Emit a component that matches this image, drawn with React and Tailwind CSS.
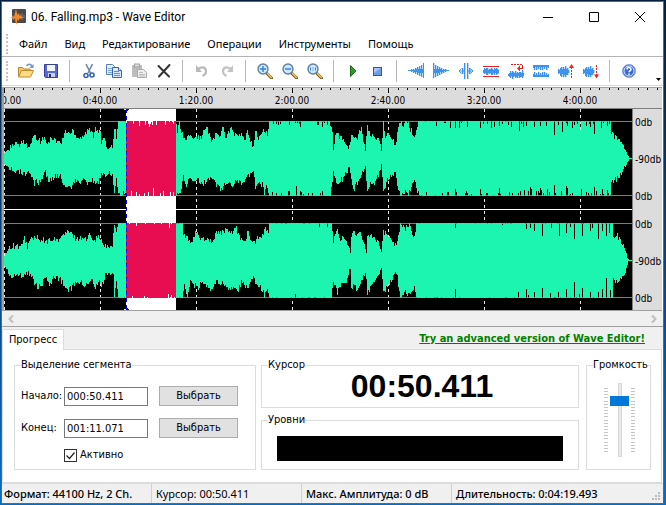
import { useState } from 'react';

const MENU = ['Файл', 'Вид', 'Редактирование', 'Операции', 'Инструменты', 'Помощь'];
const TIME_MARKS = ['0:00.00', '0:40.00', '1:20.00', '2:00.00', '2:40.00', '3:20.00', '4:00.00'];
const DB_MARKS = ['0db', '-90db', '0db', '0db', '-90db', '0db'];

const WAVE_WIDTH = 628;
const SELECTION = { start: 122, end: 172 };

// Envelopes are flat lists of [x, amplitude] pairs, full scale is 37
const CHANNELS = [
    {
        center: 49,
        roughness: 25,
        top: [0, 5, 4, 9, 8, 12, 12, 14, 16, 12, 19, 18, 25, 9, 29, 22, 32, 19, 36, 17, 40, 20, 44, 14, 46, 22, 52, 17, 57, 15, 61, 27, 66, 24, 68, 28, 74, 20, 80, 23, 84, 29, 89, 23, 91, 31, 96, 25, 97, 15, 99, 20, 102, 11, 108, 12, 110, 31, 112, 22, 114, 36, 116, 37, 120, 36, 121, 37, 172, 37, 173, 28, 175, 37, 177, 26, 182, 17, 184, 24, 187, 20, 191, 24, 195, 19, 199, 25, 202, 32, 204, 25, 207, 17, 212, 25, 215, 20, 218, 33, 221, 22, 227, 29, 233, 21, 237, 24, 240, 17, 243, 25, 249, 12, 251, 27, 254, 20, 260, 28, 263, 23, 265, 37, 325, 37, 328, 28, 329, 8, 331, 22, 333, 23, 338, 20, 345, 10, 347, 24, 352, 18, 357, 30, 361, 7, 363, 32, 366, 23, 375, 17, 377, 7, 378, 20, 379, 35, 381, 23, 388, 20, 391, 12, 394, 31, 396, 37, 399, 33, 403, 37, 406, 28, 411, 22, 414, 37, 606, 37, 607, 25, 612, 20, 616, 17, 619, 13, 621, 8, 623, 3, 625, 0],
        bottom: [0, 5, 4, 8, 8, 12, 12, 13, 16, 12, 22, 16, 25, 13, 28, 20, 30, 26, 32, 20, 34, 25, 38, 18, 41, 14, 45, 24, 48, 18, 53, 18, 56, 14, 58, 22, 62, 27, 67, 30, 71, 20, 75, 23, 80, 21, 84, 25, 88, 20, 91, 25, 94, 23, 98, 14, 101, 18, 104, 12, 108, 15, 110, 34, 112, 22, 114, 35, 116, 37, 172, 37, 176, 32, 179, 18, 182, 25, 186, 20, 189, 25, 193, 18, 196, 27, 202, 22, 208, 18, 212, 26, 217, 30, 222, 23, 228, 28, 231, 21, 238, 26, 241, 18, 249, 12, 251, 29, 254, 22, 256, 28, 258, 24, 260, 37, 262, 26, 265, 37, 326, 37, 329, 13, 333, 25, 338, 20, 345, 8, 347, 22, 349, 31, 353, 23, 361, 7, 363, 32, 366, 22, 371, 23, 375, 13, 377, 5, 379, 31, 383, 22, 391, 12, 394, 32, 396, 37, 401, 31, 404, 37, 407, 25, 411, 22, 414, 35, 418, 37, 606, 37, 607, 23, 612, 20, 616, 17, 621, 8, 623, 3, 625, 0],
        topDips: { 129: 3, 145: 6, 148: 4, 161: 4, 169: 3, 272: 3, 296: 6, 318: 6, 432: 5, 446: 7, 451: 7, 455: 7, 463: 6, 476: 7, 479: 3, 487: 7, 490: 6, 495: 5, 507: 6, 515: 10, 519: 6, 522: 5, 530: 6, 536: 5, 542: 5, 550: 14, 558: 11, 563: 5, 568: 7, 570: 4, 576: 9, 582: 5, 586: 6, 590: 13, 597: 7, 603: 5 },
        bottomDips: { 140: 3, 149: 8, 144: 4, 169: 4, 292: 10, 304: 3, 443: 4, 451: 7, 461: 3, 476: 7, 482: 3, 495: 8, 508: 3, 516: 5, 520: 6, 526: 9, 527: 7, 536: 8, 537: 6, 543: 7, 545: 4, 550: 11, 557: 5, 562: 10, 563: 8, 568: 3, 577: 7, 582: 4, 584: 3, 590: 9, 592: 5, 598: 7, 603: 6 },
    },
    {
        center: 151,
        roughness: 5,
        top: [0, 4, 2, 9, 5, 13, 9, 14, 18, 14, 20, 22, 23, 14, 26, 20, 30, 23, 33, 22, 36, 18, 39, 20, 42, 17, 47, 22, 51, 19, 56, 22, 61, 27, 64, 28, 68, 25, 72, 21, 78, 23, 82, 20, 86, 26, 90, 20, 95, 24, 97, 18, 100, 14, 104, 12, 108, 16, 110, 35, 112, 27, 114, 37, 178, 37, 179, 28, 184, 20, 188, 17, 191, 27, 194, 24, 199, 22, 204, 20, 209, 19, 213, 29, 216, 27, 220, 29, 224, 30, 228, 27, 232, 31, 236, 22, 241, 20, 244, 30, 246, 20, 250, 17, 254, 22, 259, 25, 261, 32, 264, 28, 265, 37, 327, 37, 329, 19, 333, 31, 336, 22, 342, 20, 346, 7, 347, 25, 350, 31, 352, 24, 356, 26, 362, 9, 363, 24, 367, 26, 374, 19, 377, 8, 379, 28, 384, 24, 392, 15, 396, 36, 401, 31, 405, 37, 410, 22, 412, 37, 608, 37, 609, 22, 612, 26, 616, 19, 621, 11, 623, 2, 625, 0],
        bottom: [0, 5, 4, 10, 8, 17, 14, 14, 18, 14, 22, 13, 25, 12, 29, 20, 34, 27, 38, 22, 42, 17, 45, 25, 50, 16, 56, 18, 62, 29, 67, 28, 73, 20, 78, 22, 83, 25, 88, 20, 91, 27, 95, 22, 98, 24, 101, 14, 105, 12, 109, 14, 110, 34, 112, 22, 114, 37, 178, 37, 180, 25, 183, 33, 186, 21, 190, 24, 194, 26, 197, 20, 202, 24, 207, 28, 212, 20, 218, 22, 225, 28, 230, 25, 234, 30, 237, 20, 244, 28, 248, 15, 252, 22, 256, 25, 260, 34, 263, 25, 265, 37, 327, 37, 329, 19, 333, 32, 336, 24, 341, 22, 346, 8, 347, 29, 350, 21, 353, 32, 357, 22, 361, 9, 363, 32, 369, 22, 377, 7, 379, 30, 384, 25, 392, 10, 396, 37, 401, 31, 405, 34, 410, 26, 412, 37, 608, 37, 609, 19, 612, 21, 616, 19, 621, 11, 624, 0],
        topDips: { 132: 3, 165: 5, 315: 4, 323: 4, 451: 5, 498: 2, 522: 6, 526: 5, 530: 8, 538: 13, 547: 5, 555: 13, 562: 10, 566: 4, 570: 16, 578: 13, 586: 8, 588: 5, 594: 16, 598: 8, 602: 13, 605: 10 },
        bottomDips: { 128: 2, 140: 2, 164: 4, 167: 3, 291: 4, 451: 9, 514: 6, 522: 9, 524: 3, 530: 6, 538: 10, 546: 5, 554: 6, 562: 9, 570: 16, 575: 4, 578: 10, 586: 6, 594: 6, 598: 9, 602: 20, 606: 8 },
    },
];

// Repeatable noise, so the wave does not change between renders
function noise(n) {
    const v = Math.sin(n * 127.1) * 43758.5453;
    return v - Math.floor(v);
}

function amplitudeAt(envelope, x) {
    for (let i = 0; i < envelope.length - 2; i += 2) {
        if (x >= envelope[i] && x < envelope[i + 2]) {
            const t = (x - envelope[i]) / (envelope[i + 2] - envelope[i]);
            return envelope[i + 1] + (envelope[i + 3] - envelope[i + 1]) * t;
        }
    }
    return 0;
}

function halfWave(envelope, dips, seed, roughness) {
    const result = [];
    for (let x = 0; x < WAVE_WIDTH; x++) {
        const n = noise(x + seed);
        let a = amplitudeAt(envelope, x);
        if (a > 36.5) {
            a = 37 - Math.max(0, n - 0.8) * roughness;
        } else if (a > 8) {
            a += (n - 0.5) * 6;
        }
        if (dips[x]) {
            a = 37 - dips[x];
        }
        result.push(Math.round(Math.min(a, 37)));
    }
    return result;
}

function channelPath({ center, roughness, top, bottom, topDips, bottomDips }) {
    const up = halfWave(top, topDips, center, roughness);
    const down = halfWave(bottom, bottomDips, center + 700, roughness);
    return up.map((u, x) => `M${x} ${center - u}h1v${u + down[x] + 1}h-1z`).join('');
}

const WAVE_PATH = CHANNELS.map(channelPath).join('');

function Waveform() {
    const { start, end } = SELECTION;
    return (
        <svg
            viewBox="0 0 628 201"
            preserveAspectRatio="none"
            shapeRendering="crispEdges"
            className="block h-[201px] min-w-0 flex-1 bg-black"
        >
            <defs>
                <clipPath id="selection">
                    <rect x={start} y="0" width={end - start} height="201" />
                </clipPath>
            </defs>
            {TIME_MARKS.map((mark, i) => (
                <path key={mark} d={`M${i * 96 + 0.5} 0V201`} stroke="#e8e8e8" strokeDasharray="3 3" />
            ))}
            {[12, 86, 114, 188].map((y) => (
                <rect key={y} x="0" y={y} width="628" height="1" fill="#708090" />
            ))}
            <rect x="0" y="100" width="628" height="1" fill="#fff" />
            <path d={WAVE_PATH} fill="#1bf5b0" />
            <g clipPath="url(#selection)">
                <rect x={start} y="0" width={end - start} height="201" fill="#fff" />
                <path d={WAVE_PATH} fill="#e80c50" />
            </g>
            {/* Cursor */}
            <path d={`M${start + 0.5} 0V201`} stroke="#0000ff" strokeDasharray="4 3" />
            <path d={`M${start} 0h3v1h-1v1h-2zM${start} 201h3v-1h-1v-1h-2z`} fill="#0000ff" />
            <path d={`M${start} 0h-2v1h2zM${start} 201h-2v-1h2z`} fill="#ffff00" />
        </svg>
    );
}

function Ruler() {
    return (
        <div className="overflow-hidden border-b border-[#808080] bg-[#dcdcdc]">
            <div className="mr-[30px] h-5">
                <svg
                    viewBox="0 0 628 5"
                    preserveAspectRatio="none"
                    shapeRendering="crispEdges"
                    className="block h-[5px] w-full overflow-visible"
                >
                    {Array.from({ length: 69 }, (_, i) => (
                        <rect key={i} x={Math.round(i * 9.6)} y="0" width="1" height={i % 10 ? 2 : 5} fill="#000" />
                    ))}
                </svg>
                {/* Each label is centred on its own tick, so the row starts half a cell early */}
                <div className="-ml-[7.64%] flex w-full">
                    {TIME_MARKS.map((mark) => (
                        <span key={mark} className="w-[15.287%] shrink-0 text-center text-[10px] leading-4">
                            {mark}
                        </span>
                    ))}
                </div>
            </div>
        </div>
    );
}

// Columns of a small blue wave: [x, y, height], with a pale shadow to the right
function Bars({ data }) {
    return (
        <>
            {data.map(([x, y, h]) => <rect key={`s${x}-${y}`} x={x + 1} y={y} width="1" height={h} fill="#b5d8fa" />)}
            {data.map(([x, y, h]) => <rect key={`${x}-${y}`} x={x} y={y} width="1" height={h} fill="#3b93ee" />)}
        </>
    );
}

function Lens({ children }) {
    return (
        <>
            <path d="M10 10.500L14.500 15" stroke="#7a5a1c" strokeWidth="3" strokeLinecap="round" />
            <path d="M10.500 10.500L14.300 14.500" stroke="#f0c860" strokeWidth="1.500" strokeLinecap="round" />
            <circle cx="6" cy="6" r="5" fill="#cfe6fb" stroke="#5f7f9f" strokeWidth="1.400" />
            {children}
        </>
    );
}

const FADE = [[0, 7, 1], [1, 7, 1], [2, 7, 1], [3, 6, 3], [4, 7, 1], [5, 6, 4], [6, 7, 2], [7, 5, 6], [8, 6, 3], [9, 4, 8], [10, 6, 4], [11, 3, 10], [12, 6, 4], [13, 2, 12], [14, 6, 4], [15, 0, 15]];
const SMALL_WAVE = [[0, 6, 5], [1, 7, 3], [2, 5, 8], [3, 4, 10], [4, 6, 5], [5, 4, 10], [6, 6, 6], [7, 3, 11], [8, 6, 6], [9, 5, 7], [10, 7, 3]];

const ICONS = {
    open: (
        <>
            <path d="M.5 13.500V4.500h4l1.500 1.500h6v2" fill="#f3c65a" stroke="#b8862b" />
            <path d="M.5 14l3-6.500h12l-3 6.500z" fill="#fbdc85" stroke="#c08d2e" />
            <path d="M8.500 3c2-2.500 4-2 5.500 0" fill="none" stroke="#6b93bd" strokeWidth="1.400" />
            <path d="M15.500 1v4h-4z" fill="#6b93bd" />
        </>
    ),
    save: (
        <>
            <path d="M1.500 1.500h13v13h-12l-1-1z" fill="#5a68cf" stroke="#343f9f" />
            <rect x="4" y="2" width="8" height="6" fill="#f4f6ff" />
            <rect x="5" y="10" width="7" height="4" fill="#c9cff0" />
            <rect x="6" y="11" width="2" height="3" fill="#29307c" />
        </>
    ),
    cut: (
        <>
            <path d="M5 1l4.500 9M11.500 1L7 10" stroke="#6c86a8" strokeWidth="1.600" />
            <circle cx="5" cy="12.500" r="2" fill="none" stroke="#2f62b8" strokeWidth="1.600" />
            <circle cx="11" cy="12" r="2" fill="none" stroke="#2f62b8" strokeWidth="1.600" />
        </>
    ),
    copy: (
        <>
            <path d="M.5 1.500h6l2 2v8h-8z" fill="#e6f0fd" stroke="#4f7fc4" />
            <path d="M2 5.500h4M2 7.500h4M2 9.500h4" stroke="#7fa6dc" />
            <path d="M6.500 4.500h6l3 3v7h-9z" fill="#dbe9fc" stroke="#3567b0" />
            <path d="M8 8.500h5M8 10.500h6M8 12.500h6" stroke="#5f8fd2" />
            <path d="M12.500 4.500v3h3" fill="#fff" stroke="#3567b0" />
        </>
    ),
    paste: (
        <>
            <rect x="1" y="2" width="10" height="12" rx="1" fill="#bdbdbd" />
            <rect x="3.500" y="1" width="5" height="3" fill="#dedede" stroke="#a0a0a0" />
            <path d="M6.500 6.500h6l3 3v5h-9z" fill="#efefef" stroke="#a8a8a8" />
            <path d="M8 9.500h4M8 11.500h6M8 13h6" stroke="#bcbcbc" />
        </>
    ),
    remove: <path d="M2.500 3L13 13.500M13.500 2L3 13.500" stroke="#333" strokeWidth="2" strokeLinecap="round" />,
    undo: (
        <>
            <path d="M4 6c5-3.500 8-1 8 2.500 0 2-1.500 3.500-3.500 4.500" fill="none" stroke="#b9b9b9" strokeWidth="2.200" />
            <path d="M2 2v7h6z" fill="#b9b9b9" />
        </>
    ),
    redo: (
        <>
            <path d="M12 6c-5-3.500-8-1-8 2.500 0 2 1.500 3.500 3.500 4.500" fill="none" stroke="#c3c3c3" strokeWidth="2.200" />
            <path d="M14 2v7H8z" fill="#c3c3c3" />
        </>
    ),
    zoomIn: <Lens><path d="M3 6h6M6 3v6" stroke="#2f7fe0" strokeWidth="1.400" /></Lens>,
    zoomOut: <Lens><path d="M3 6h6" stroke="#2f7fe0" strokeWidth="1.400" /></Lens>,
    zoomFit: <Lens><path d="M3.500 4.500v3M8.500 4.500v3M6 4.500v1M6 6.500v1" stroke="#2f7fe0" /></Lens>,
    play: <path d="M5.500 2.500v11l5.500-5.500z" fill="#2f9a2f" stroke="#1c701c" />,
    stop: (
        <>
            <rect x="3.500" y="4.500" width="8" height="8" fill="#6f9bea" stroke="#3a4fae" />
            <path d="M4 5h7L4 10z" fill="#a9c6f8" />
        </>
    ),
    fadeIn: <Bars data={FADE} />,
    fadeOut: <Bars data={FADE.map(([x, y, h]) => [15 - x, y, h])} />,
    split: (
        <>
            <Bars data={[[6, 0, 16], [9, 0, 16], [4, 5, 6], [11, 5, 6]]} />
            <path d="M1 8h5M10 8h5M3.500 5.500L1 8l2.500 2.500M12.500 5.500L15 8l-2.500 2.500" stroke="#3b93ee" fill="none" />
        </>
    ),
    normalize: (
        <>
            <Bars data={[[0, 7, 3], [1, 5, 6], [2, 6, 4], [3, 5, 7], [4, 5, 7], [5, 7, 3], [6, 6, 5], [7, 6, 4], [8, 5, 7], [9, 6, 6], [10, 7, 3], [11, 5, 7], [12, 6, 4], [13, 5, 7], [14, 6, 5], [15, 7, 3]]} />
            <rect y="3" width="16" height="1" fill="#f02020" />
            <rect y="13" width="16" height="1" fill="#f02020" />
        </>
    ),
    reverse: (
        <>
            <Bars data={[[0, 11, 2], [1, 10, 4], [2, 8, 7], [3, 10, 3], [4, 8, 8], [5, 9, 5], [6, 10, 3], [7, 8, 7], [8, 10, 4], [9, 9, 6], [10, 10, 3], [11, 9, 6], [12, 9, 5], [13, 10, 4], [14, 7, 8], [15, 10, 3]]} />
            <path d="M3 1.500h11" stroke="#f02020" strokeDasharray="2 1" />
            <path d="M14.500 2v3M11 5.500h4" stroke="#f02020" />
            <path d="M9 5.500l3-3v6z" fill="#f02020" />
        </>
    ),
    invert: (
        <>
            <rect y="2" width="16" height="3" fill="#3b93ee" />
            <rect y="11" width="16" height="3" fill="#3b93ee" />
            <Bars data={[[1, 4, 3], [3, 4, 3], [5, 4, 2], [7, 4, 3], [9, 4, 3], [11, 4, 2], [13, 4, 3], [1, 9, 3], [3, 10, 2], [5, 9, 3], [7, 10, 2], [9, 9, 3], [11, 9, 3], [13, 10, 2]]} />
        </>
    ),
    louder: (
        <>
            <Bars data={SMALL_WAVE} />
            <path d="M13.500 4v11" stroke="#f02020" strokeDasharray="2 1" />
            <path d="M13.500 1l2.500 4h-5z" fill="#f02020" />
        </>
    ),
    quieter: (
        <>
            <Bars data={SMALL_WAVE} />
            <path d="M13.500 2v11" stroke="#f02020" strokeDasharray="2 1" />
            <path d="M13.500 15.500l2.500-4h-5z" fill="#f02020" />
        </>
    ),
    help: (
        <>
            <circle cx="8" cy="8" r="6.500" fill="#3869cf" stroke="#7f9fe0" />
            <circle cx="8" cy="8" r="5" fill="none" stroke="#e4edff" />
            <path d="M6 6.500C6 4 10 4 10 6.300 10 8 8 7.700 8 9.300M8 10.500v1.500" fill="none" stroke="#fff" strokeWidth="1.500" />
        </>
    ),
};

const TOOLBAR = [
    [['open', 'Открыть'], ['save', 'Сохранить']],
    [['cut', 'Вырезать'], ['copy', 'Копировать'], ['paste', 'Вставить'], ['remove', 'Удалить']],
    [['undo', 'Отменить'], ['redo', 'Повторить']],
    [['zoomIn', 'Увеличить'], ['zoomOut', 'Уменьшить'], ['zoomFit', 'Весь файл']],
    [['play', 'Воспроизвести'], ['stop', 'Стоп']],
    [
        ['fadeIn', 'Нарастание'],
        ['fadeOut', 'Затухание'],
        ['split', 'Вставить тишину'],
        ['normalize', 'Нормализация'],
        ['reverse', 'Реверс'],
        ['invert', 'Инвертировать'],
        ['louder', 'Громче'],
        ['quieter', 'Тише'],
    ],
    [['help', 'Справка']],
];

function Toolbar() {
    return (
        <div className="flex h-[29px] items-center border-b border-[#d8d8d8] pl-1">
            <Grip />
            <div className="ml-[5px] flex flex-1 items-center">
                {TOOLBAR.map((group, i) => (
                    <div key={i} className="flex items-center">
                        {i > 0 && <span className="mx-1.5 h-[22px] w-px bg-[#b8b8b8]" />}
                        {group.map(([icon, label]) => (
                            <button key={icon} type="button" aria-label={label} className="flex h-6 w-[25px] items-center justify-center">
                                <svg viewBox="0 0 16 16" className="size-4">{ICONS[icon]}</svg>
                            </button>
                        ))}
                    </div>
                ))}
            </div>
            <button type="button" aria-label="Ещё" className="mr-0.5 self-end pb-1">
                <svg viewBox="0 0 5 3" className="block h-[3px] w-[5px]"><path d="M0 0h5L2.500 3z" /></svg>
            </button>
        </div>
    );
}

function Grip() {
    return <span className="h-5 w-0 border-l-2 border-dotted border-[#c4c4c4]" />;
}

const WINDOW_BUTTONS = [
    ['Свернуть', <path d="M0 5.500h10" />],
    ['Развернуть', <path d="M.5.500h9v9h-9z" />],
    ['Закрыть', <path d="M0 0l10 10M10 0L0 10" />],
];

function TitleBar() {
    return (
        <div className="flex h-[30px] items-center pl-2">
            <svg viewBox="0 0 16 16" className="size-4">
                <rect x="2" y="0" width="14" height="14" rx="1" fill="#4a4a4e" />
                <path d="M10 5v5M12 4v7M14 6v3" stroke="#77777c" />
                <path d="M0 8h2l1-2 1 2 2-8 1.500 6 1-2 1 3 1.500-1 1 2h3l-3 1-1 1-1.500-1-1 3-1-2L6.500 16 4.500 9l-1 2-1.500-2z" fill="#f0892c" />
            </svg>
            <h1 className="ml-[5px] flex-1 font-['Roboto',sans-serif] text-xs">06. Falling.mp3 - Wave Editor</h1>
            {WINDOW_BUTTONS.map(([label, shape]) => (
                <button key={label} type="button" aria-label={label} className="flex h-full w-[46px] items-center justify-center">
                    <svg viewBox="0 0 10 10" fill="none" stroke="#000" className="size-2.5 overflow-visible">{shape}</svg>
                </button>
            ))}
        </div>
    );
}

function Group({ title, className, children }) {
    return (
        <fieldset className={`min-w-0 border border-[#dcdcdc] ${className}`}>
            <legend className="ml-1.5 leading-[14px]">{title}</legend>
            {children}
        </fieldset>
    );
}

function TimeField({ id, label, value, onChange }) {
    return (
        <div className="flex h-5 items-center">
            <label htmlFor={id} className="w-[43px]">{label}</label>
            <input
                id={id}
                type="text"
                value={value}
                onChange={(e) => onChange(e.target.value)}
                className="h-[19px] w-[84px] border border-[#7a7a7a] bg-white px-0.5"
            />
            <button type="button" className="ml-[11px] h-5 w-[79px] border border-[#adadad] bg-[#e1e1e1]">
                Выбрать
            </button>
        </div>
    );
}

function Ticks() {
    return (
        <svg viewBox="0 0 4 64" shapeRendering="crispEdges" className="h-16 w-1">
            {Array.from({ length: 21 }, (_, i) => (
                <rect key={i} y={Math.round(i * 3.15)} width="4" height="1" fill="#c4c4c4" />
            ))}
        </svg>
    );
}

function StatusCell({ className, children }) {
    return <span className={`border-[#d0d0d0] pr-1 ${className}`}>{children}</span>;
}

export default function App() {
    const [start, setStart] = useState('000:50.411');
    const [end, setEnd] = useState('001:11.071');
    const [active, setActive] = useState(true);
    const [volume, setVolume] = useState(80);

    return (
        <div className="bg-linear-to-b from-[#04203f] to-[#0a6cc0] py-px pr-0.5 pl-px font-['Noto_Sans',sans-serif] text-black">
            <div className="border border-[#1979ca] bg-white">
                <TitleBar />

                <nav className="flex h-[25px] items-center border-b border-[#b4b4b4] pl-1 text-[11px]">
                    <Grip />
                    <div className="ml-[11px] flex gap-[17px]">
                        {MENU.map((item) => (
                            <button key={item} type="button">{item}</button>
                        ))}
                    </div>
                </nav>

                <Toolbar />

                <div className="font-['DejaVu_Sans_Condensed','DejaVu_Sans',sans-serif] text-[11px]">
                    <div className="mt-px mr-px border-y border-l-2 border-[#a0a0a0] bg-[#dcdcdc]">
                        <Ruler />
                        <div className="flex">
                            <Waveform />
                            <div className="flex w-[30px] flex-col gap-[23px] border-l border-[#808080] pt-[7px] pl-0.5 text-[10px] leading-[14px]">
                                {DB_MARKS.map((mark, i) => (
                                    <span key={i} className={i === 3 ? '-mt-[9px]' : ''}>{mark}</span>
                                ))}
                            </div>
                        </div>
                    </div>

                    {/* Scroll bar */}
                    <div className="flex h-4 items-center justify-between border-b border-[#a0a0a0] bg-[#f0f0f0] px-1.5">
                        <svg viewBox="0 0 6 8" className="h-2 w-1.5"><path d="M5 .5L1.500 4 5 7.500" fill="none" stroke="#bfbfbf" strokeWidth="2" /></svg>
                        <svg viewBox="0 0 6 8" className="h-2 w-1.5"><path d="M1 .5L4.500 4 1 7.500" fill="none" stroke="#bfbfbf" strokeWidth="2" /></svg>
                    </div>

                    <div className="flex h-[22px] items-end justify-between bg-[#f0f0f0]">
                        <button type="button" className="-mb-px h-[21px] w-[62px] border-x border-t border-[#dcdcdc] bg-white">
                            Прогресс
                        </button>
                        <a href="#advanced" className="mr-[18px] leading-5 font-bold text-[#008000] underline">
                            Try an advanced version of Wave Editor!
                        </a>
                    </div>

                    <div className="mr-px flex gap-[5px] border border-[#dcdcdc] bg-white pt-2 pr-2.5 pb-3 pl-[11px]">
                        <Group title="Выделение сегмента" className="w-[242px] pb-[7px]">
                            <div className="mt-3.5 flex flex-col gap-3 pl-1.5">
                                <TimeField id="start" label="Начало:" value={start} onChange={setStart} />
                                <TimeField id="end" label="Конец:" value={end} onChange={setEnd} />
                            </div>
                            <label className="mt-2.5 ml-[49px] flex items-center gap-[3px] leading-[14px]">
                                <input
                                    type="checkbox"
                                    checked={active}
                                    onChange={(e) => setActive(e.target.checked)}
                                    className="peer size-[13px] appearance-none border border-[#333] bg-white"
                                />
                                <svg viewBox="0 0 13 13" className="-ml-4 hidden size-[13px] peer-checked:block">
                                    <path d="M2.500 6.500l3 3 5-6" fill="none" stroke="#222" strokeWidth="1.200" />
                                </svg>
                                Активно
                            </label>
                        </Group>

                        <div className="flex min-w-0 flex-1 flex-col justify-between">
                            <Group title="Курсор" className="h-[50px]">
                                <output className="block pl-1 text-center font-['Liberation_Sans',sans-serif] text-[32px] leading-[28px] font-bold">
                                    00:50.411
                                </output>
                            </Group>
                            <Group title="Уровни" className="pb-2">
                                <div className="mx-[15px] mt-[9px] h-[25px] bg-black" />
                            </Group>
                        </div>

                        <Group title="Громкость" className="ml-0.5 w-[65px]">
                            <div className="mt-[11px] flex items-center justify-center gap-0.5 pl-0.5">
                                <Ticks />
                                <input
                                    type="range"
                                    aria-label="Громкость"
                                    value={volume}
                                    onChange={(e) => setVolume(Number(e.target.value))}
                                    className="h-[74px] w-[19px] appearance-none bg-transparent [direction:rtl] [writing-mode:vertical-lr] [&::-webkit-slider-runnable-track]:mx-auto [&::-webkit-slider-runnable-track]:h-full [&::-webkit-slider-runnable-track]:w-1 [&::-webkit-slider-runnable-track]:border [&::-webkit-slider-runnable-track]:border-[#d6d6d6] [&::-webkit-slider-runnable-track]:bg-[#e7eaea] [&::-webkit-slider-thumb]:-ml-[9px] [&::-webkit-slider-thumb]:h-2.5 [&::-webkit-slider-thumb]:w-[19px] [&::-webkit-slider-thumb]:appearance-none [&::-webkit-slider-thumb]:bg-[#0078d7]"
                                />
                                <Ticks />
                            </div>
                        </Group>
                    </div>
                </div>

                <footer className="flex border-t border-[#dcdcdc] bg-[#f0f0f0] text-[11px] leading-[19px] font-medium">
                    <StatusCell className="w-[149px] pl-0.5">Формат: 44100 Hz, 2 Ch.</StatusCell>
                    <StatusCell className="w-[150px] border-l pl-1 font-normal">Курсор: 00:50.411</StatusCell>
                    <StatusCell className="w-[150px] border-l pl-1">Макс. Амплитуда: 0 dB</StatusCell>
                    <StatusCell className="flex-1 border-l pl-1">Длительность: 0:04:19.493</StatusCell>
                    <svg viewBox="0 0 9 9" className="mr-0.5 mb-0.5 size-[9px] self-end">
                        <path d="M6 0h2v2H6zM3 3h2v2H3zM6 3h2v2H6zM0 6h2v2H0zM3 6h2v2H3zM6 6h2v2H6z" fill="#bfbfbf" />
                    </svg>
                </footer>
            </div>
        </div>
    );
}
